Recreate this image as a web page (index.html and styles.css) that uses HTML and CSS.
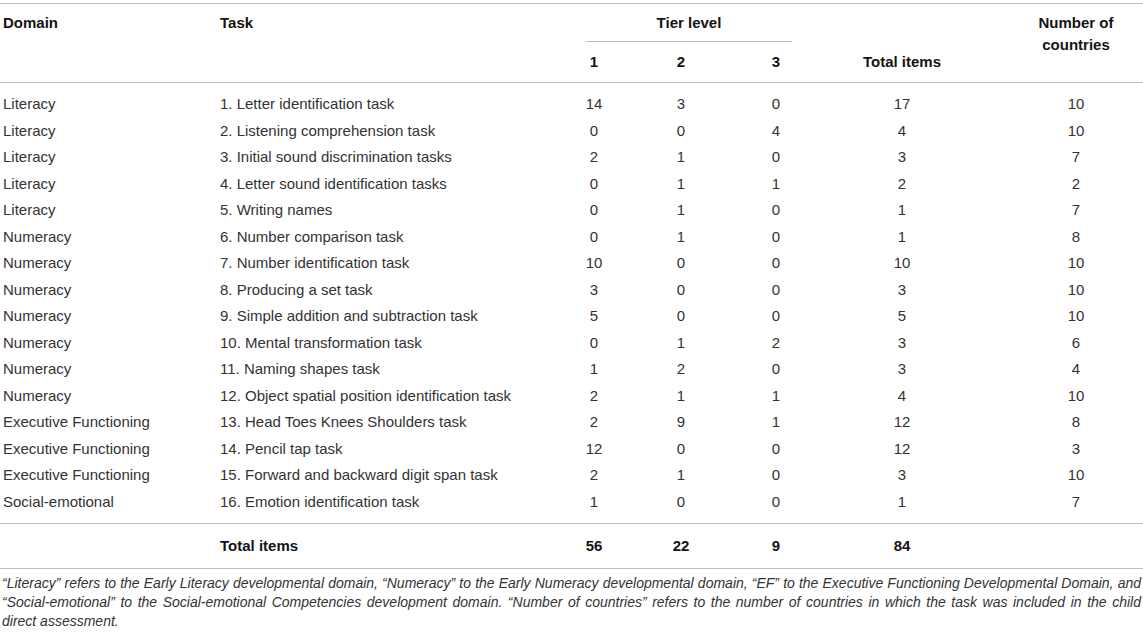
FILE: index.html
```html
<!DOCTYPE html>
<html lang="en">
<head>
<meta charset="utf-8">
<title>Table</title>
<link rel="stylesheet" href="styles.css">
</head>
<body>
<div class="table">
  <div class="thead">
    <div class="h-domain">Domain</div>
    <div class="h-task">Task</div>
    <div class="h-tier"><span class="tier-label">Tier level</span></div>
    <div class="h-t1">1</div>
    <div class="h-t2">2</div>
    <div class="h-t3">3</div>
    <div class="h-total">Total items</div>
    <div class="h-countries">Number of<br>countries</div>
  </div>
  <div class="tbody">
    <div class="row"><div class="c-dom">Literacy</div><div class="c-task">1. Letter identification task</div><div class="c-num">14</div><div class="c-num">3</div><div class="c-num">0</div><div class="c-num">17</div><div class="c-cty">10</div></div>
    <div class="row"><div class="c-dom">Literacy</div><div class="c-task">2. Listening comprehension task</div><div class="c-num">0</div><div class="c-num">0</div><div class="c-num">4</div><div class="c-num">4</div><div class="c-cty">10</div></div>
    <div class="row"><div class="c-dom">Literacy</div><div class="c-task">3. Initial sound discrimination tasks</div><div class="c-num">2</div><div class="c-num">1</div><div class="c-num">0</div><div class="c-num">3</div><div class="c-cty">7</div></div>
    <div class="row"><div class="c-dom">Literacy</div><div class="c-task">4. Letter sound identification tasks</div><div class="c-num">0</div><div class="c-num">1</div><div class="c-num">1</div><div class="c-num">2</div><div class="c-cty">2</div></div>
    <div class="row"><div class="c-dom">Literacy</div><div class="c-task">5. Writing names</div><div class="c-num">0</div><div class="c-num">1</div><div class="c-num">0</div><div class="c-num">1</div><div class="c-cty">7</div></div>
    <div class="row"><div class="c-dom">Numeracy</div><div class="c-task">6. Number comparison task</div><div class="c-num">0</div><div class="c-num">1</div><div class="c-num">0</div><div class="c-num">1</div><div class="c-cty">8</div></div>
    <div class="row"><div class="c-dom">Numeracy</div><div class="c-task">7. Number identification task</div><div class="c-num">10</div><div class="c-num">0</div><div class="c-num">0</div><div class="c-num">10</div><div class="c-cty">10</div></div>
    <div class="row"><div class="c-dom">Numeracy</div><div class="c-task">8. Producing a set task</div><div class="c-num">3</div><div class="c-num">0</div><div class="c-num">0</div><div class="c-num">3</div><div class="c-cty">10</div></div>
    <div class="row"><div class="c-dom">Numeracy</div><div class="c-task">9. Simple addition and subtraction task</div><div class="c-num">5</div><div class="c-num">0</div><div class="c-num">0</div><div class="c-num">5</div><div class="c-cty">10</div></div>
    <div class="row"><div class="c-dom">Numeracy</div><div class="c-task">10. Mental transformation task</div><div class="c-num">0</div><div class="c-num">1</div><div class="c-num">2</div><div class="c-num">3</div><div class="c-cty">6</div></div>
    <div class="row"><div class="c-dom">Numeracy</div><div class="c-task">11. Naming shapes task</div><div class="c-num">1</div><div class="c-num">2</div><div class="c-num">0</div><div class="c-num">3</div><div class="c-cty">4</div></div>
    <div class="row"><div class="c-dom">Numeracy</div><div class="c-task">12. Object spatial position identification task</div><div class="c-num">2</div><div class="c-num">1</div><div class="c-num">1</div><div class="c-num">4</div><div class="c-cty">10</div></div>
    <div class="row"><div class="c-dom">Executive Functioning</div><div class="c-task">13. Head Toes Knees Shoulders task</div><div class="c-num">2</div><div class="c-num">9</div><div class="c-num">1</div><div class="c-num">12</div><div class="c-cty">8</div></div>
    <div class="row"><div class="c-dom">Executive Functioning</div><div class="c-task">14. Pencil tap task</div><div class="c-num">12</div><div class="c-num">0</div><div class="c-num">0</div><div class="c-num">12</div><div class="c-cty">3</div></div>
    <div class="row"><div class="c-dom">Executive Functioning</div><div class="c-task">15. Forward and backward digit span task</div><div class="c-num">2</div><div class="c-num">1</div><div class="c-num">0</div><div class="c-num">3</div><div class="c-cty">10</div></div>
    <div class="row"><div class="c-dom">Social-emotional</div><div class="c-task">16. Emotion identification task</div><div class="c-num">1</div><div class="c-num">0</div><div class="c-num">0</div><div class="c-num">1</div><div class="c-cty">7</div></div>
  </div>
  <div class="tfoot">
    <div class="row total"><div class="c-dom"></div><div class="c-task">Total items</div><div class="c-num">56</div><div class="c-num">22</div><div class="c-num">9</div><div class="c-num">84</div><div class="c-cty"></div></div>
  </div>
</div>
<p class="note">“Literacy” refers to the Early Literacy developmental domain, “Numeracy” to the Early Numeracy developmental domain, “EF” to the Executive Functioning Developmental Domain, and “Social-emotional” to the Social-emotional Competencies development domain. “Number of countries” refers to the number of countries in which the task was included in the child <span class="nowrap">direct assessment.</span></p>
</body>
</html>
```

FILE: styles.css
```css
html, body {
  margin: 0;
  padding: 0;
  background: #ffffff;
}

body {
  font-family: "Liberation Sans", Arial, Helvetica, sans-serif;
  font-size: 15px;
  color: #333333;
  width: 1143px;
}

.table {
  padding-top: 3px;
}

.thead {
  display: grid;
  grid-template-columns: 218px 338px 76px 98px 92px 160px 161px;
  grid-template-rows: auto auto;
  border-top: 1px solid #bdbdbd;
  border-bottom: 1px solid #bdbdbd;
  font-weight: bold;
  color: #141414;
  line-height: 18px;
}

.h-domain {
  grid-column: 1;
  grid-row: 1 / 3;
  padding: 10px 0 0 3px;
}

.h-task {
  grid-column: 2;
  grid-row: 1 / 3;
  padding: 10px 0 0 2px;
}

.h-tier {
  grid-column: 3 / 6;
  grid-row: 1;
  padding: 10px 30px 0 30px;
}

.tier-label {
  display: block;
  text-align: center;
  padding-bottom: 9px;
  border-bottom: 1px solid #bdbdbd;
}

.h-t1, .h-t2, .h-t3 {
  grid-row: 2;
  text-align: center;
  padding: 11px 0 11px 0;
}

.h-t1 { grid-column: 3; }
.h-t2 { grid-column: 4; }
.h-t3 { grid-column: 5; }

.h-total {
  grid-column: 6;
  grid-row: 1 / 3;
  align-self: end;
  text-align: center;
  padding-bottom: 11px;
}

.h-countries {
  grid-column: 7;
  grid-row: 1 / 3;
  text-align: center;
  padding: 8px 0 0 27px;
  line-height: 22px;
}

.tbody {
  padding: 8px 0 8px 0;
  border-bottom: 1px solid #bdbdbd;
}

.row {
  display: grid;
  grid-template-columns: 218px 338px 76px 98px 92px 160px 161px;
  height: 26.5px;
  align-items: center;
  line-height: 18px;
}

.c-dom {
  padding-left: 3px;
  white-space: nowrap;
}

.c-task {
  padding-left: 2px;
  white-space: nowrap;
}

.c-num {
  text-align: center;
}

.c-cty {
  text-align: center;
  padding-left: 27px;
}

.tfoot {
  padding: 9px 0 8px 0;
  border-bottom: 1px solid #bdbdbd;
}

.total {
  font-weight: bold;
  color: #141414;
}

.note {
  margin: 5px 0 0 0;
  padding: 0 2px 0 2px;
  font-size: 14px;
  font-style: italic;
  line-height: 19px;
  text-align: justify;
  color: #333333;
}

.nowrap {
  white-space: nowrap;
}
```
